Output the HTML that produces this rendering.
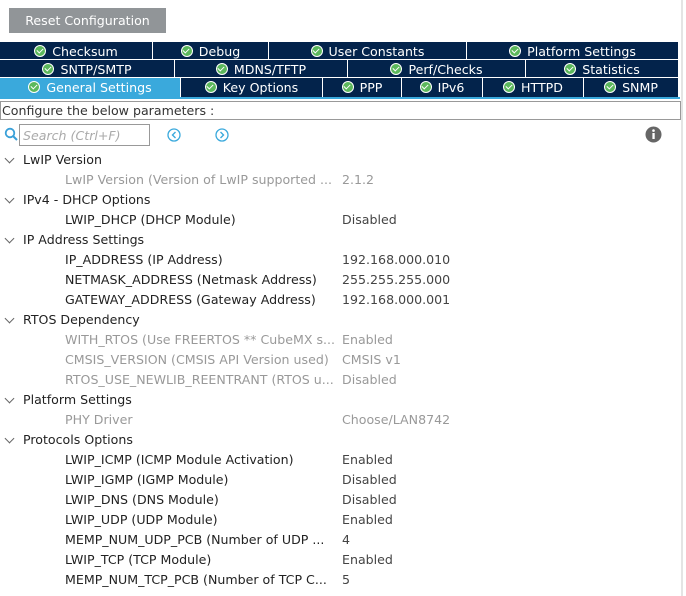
<!DOCTYPE html>
<html><head><style>
*{margin:0;padding:0;box-sizing:border-box}
body{width:686px;height:596px;background:#fff;font-family:"DejaVu Sans","Liberation Sans",sans-serif;font-size:12.6px;color:#222;position:relative;overflow:hidden}
.abs{position:absolute}
.btn{left:9px;top:8px;width:157px;height:25px;background:#919598;color:#fff;text-align:center;line-height:25px}
.tab{position:absolute;background:#03234b;color:#fff;text-align:center;white-space:nowrap;padding-top:1px}
.tab.sel{background:#3aa9dc}
.ck{display:inline-block;width:12px;height:12px;border-radius:50%;background:#5cb85c;border:1.5px solid #fff;vertical-align:-1px;margin-right:6px;position:relative}
.ck:after{content:"";position:absolute;left:2.5px;top:1px;width:3px;height:5px;border:solid #fff;border-width:0 1.6px 1.6px 0;transform:rotate(45deg)}
.row{position:absolute;height:20px;line-height:20px;white-space:nowrap}
.g{color:#999}
.v{position:absolute;left:342px;color:#444}
.chev{position:absolute;left:6px;width:7px;height:7px;border:solid #666;border-width:0 1px 1px 0;transform:rotate(45deg)}
</style></head><body>
<div class="abs btn">Reset Configuration</div>
<div class="tab" style="left:0;top:42px;width:152px;height:17px;line-height:17px"><span class="ck"></span>Checksum</div>
<div class="tab" style="left:153px;top:42px;width:115px;height:17px;line-height:17px"><span class="ck"></span>Debug</div>
<div class="tab" style="left:269px;top:42px;width:197px;height:17px;line-height:17px"><span class="ck"></span>User Constants</div>
<div class="tab" style="left:467px;top:42px;width:211px;height:17px;line-height:17px"><span class="ck"></span>Platform Settings</div>
<div class="tab" style="left:0;top:60px;width:174px;height:17px;line-height:17px"><span class="ck"></span>SNTP/SMTP</div>
<div class="tab" style="left:175px;top:60px;width:172px;height:17px;line-height:17px"><span class="ck"></span>MDNS/TFTP</div>
<div class="tab" style="left:348px;top:60px;width:177px;height:17px;line-height:17px"><span class="ck"></span>Perf/Checks</div>
<div class="tab" style="left:526px;top:60px;width:152px;height:17px;line-height:17px"><span class="ck"></span>Statistics</div>
<div class="tab sel" style="left:0;top:78px;width:180px;height:19px;line-height:17px"><span class="ck"></span>General Settings</div>
<div class="tab" style="left:181px;top:78px;width:141px;height:19px;line-height:17px"><span class="ck"></span>Key Options</div>
<div class="tab" style="left:323px;top:78px;width:78px;height:19px;line-height:17px"><span class="ck"></span>PPP</div>
<div class="tab" style="left:402px;top:78px;width:80px;height:19px;line-height:17px"><span class="ck"></span>IPv6</div>
<div class="tab" style="left:483px;top:78px;width:100px;height:19px;line-height:17px"><span class="ck"></span>HTTPD</div>
<div class="tab" style="left:584px;top:78px;width:94px;height:19px;line-height:17px"><span class="ck"></span>SNMP</div>
<div class="abs" style="left:0;top:97px;width:680px;height:2px;background:#3aa9dc"></div>
<div class="abs" style="left:681px;top:0;width:2px;height:596px;background:#e4e4e4"></div>
<div class="abs" style="left:0;top:101px;width:681px;height:19px;border:1px solid #999;line-height:18px;padding-left:1px;color:#333">Configure the below parameters :</div>
<svg class="abs" style="left:4px;top:127px" width="16" height="16"><circle cx="6" cy="6" r="4.3" fill="none" stroke="#3aa0d8" stroke-width="1.8"/><line x1="9" y1="9" x2="13" y2="13" stroke="#3aa0d8" stroke-width="2"/></svg>
<div class="abs" style="left:19px;top:124px;width:131px;height:22px;border:1px solid #999;color:#aaa;font-style:italic;line-height:21px;padding-left:3px">Search (Ctrl+F)</div>
<svg class="abs" style="left:167px;top:128px" width="14" height="14"><circle cx="7" cy="7" r="6" fill="none" stroke="#3aa9dc" stroke-width="1.3"/><path d="M8.5 4 L5.5 7 L8.5 10" fill="none" stroke="#3aa9dc" stroke-width="1.4"/></svg>
<svg class="abs" style="left:215px;top:128px" width="14" height="14"><circle cx="7" cy="7" r="6" fill="none" stroke="#3aa9dc" stroke-width="1.3"/><path d="M5.5 4 L8.5 7 L5.5 10" fill="none" stroke="#3aa9dc" stroke-width="1.4"/></svg>
<svg class="abs" style="left:645px;top:126px" width="17" height="17"><circle cx="8.5" cy="8.5" r="8" fill="#666"/><rect x="7.4" y="7" width="2.3" height="6" fill="#fff"/><circle cx="8.5" cy="4.6" r="1.3" fill="#fff"/></svg>

<div style="position:absolute;left:0;top:1px;width:686px;height:595px">
<div class="row" style="top:149px;left:0;width:680px"><span class="chev" style="top:5px"></span><span style="position:absolute;left:23px">LwIP Version</span></div>
<div class="row g" style="top:169px;left:65px">LwIP Version (Version of LwIP supported ...</div><div class="row v g" style="top:169px;color:#999">2.1.2</div>
<div class="row" style="top:189px;left:0"><span class="chev" style="top:5px"></span><span style="position:absolute;left:23px">IPv4 - DHCP Options</span></div>
<div class="row" style="top:209px;left:65px">LWIP_DHCP (DHCP Module)</div><div class="row v" style="top:209px">Disabled</div>
<div class="row" style="top:229px;left:0"><span class="chev" style="top:5px"></span><span style="position:absolute;left:23px">IP Address Settings</span></div>
<div class="row" style="top:249px;left:65px">IP_ADDRESS (IP Address)</div><div class="row v" style="top:249px">192.168.000.010</div>
<div class="row" style="top:269px;left:65px">NETMASK_ADDRESS (Netmask Address)</div><div class="row v" style="top:269px">255.255.255.000</div>
<div class="row" style="top:289px;left:65px">GATEWAY_ADDRESS (Gateway Address)</div><div class="row v" style="top:289px">192.168.000.001</div>
<div class="row" style="top:309px;left:0"><span class="chev" style="top:5px"></span><span style="position:absolute;left:23px">RTOS Dependency</span></div>
<div class="row g" style="top:329px;left:65px">WITH_RTOS (Use FREERTOS ** CubeMX s...</div><div class="row v" style="top:329px;color:#999">Enabled</div>
<div class="row g" style="top:349px;left:65px">CMSIS_VERSION (CMSIS API Version used)</div><div class="row v" style="top:349px;color:#999">CMSIS v1</div>
<div class="row g" style="top:369px;left:65px">RTOS_USE_NEWLIB_REENTRANT (RTOS u...</div><div class="row v" style="top:369px;color:#999">Disabled</div>
<div class="row" style="top:389px;left:0"><span class="chev" style="top:5px"></span><span style="position:absolute;left:23px">Platform Settings</span></div>
<div class="row g" style="top:409px;left:65px">PHY Driver</div><div class="row v" style="top:409px;color:#999">Choose/LAN8742</div>
<div class="row" style="top:429px;left:0"><span class="chev" style="top:5px"></span><span style="position:absolute;left:23px">Protocols Options</span></div>
<div class="row" style="top:449px;left:65px">LWIP_ICMP (ICMP Module Activation)</div><div class="row v" style="top:449px">Enabled</div>
<div class="row" style="top:469px;left:65px">LWIP_IGMP (IGMP Module)</div><div class="row v" style="top:469px">Disabled</div>
<div class="row" style="top:489px;left:65px">LWIP_DNS (DNS Module)</div><div class="row v" style="top:489px">Disabled</div>
<div class="row" style="top:509px;left:65px">LWIP_UDP (UDP Module)</div><div class="row v" style="top:509px">Enabled</div>
<div class="row" style="top:529px;left:65px">MEMP_NUM_UDP_PCB (Number of UDP ...</div><div class="row v" style="top:529px">4</div>
<div class="row" style="top:549px;left:65px">LWIP_TCP (TCP Module)</div><div class="row v" style="top:549px">Enabled</div>
<div class="row" style="top:569px;left:65px">MEMP_NUM_TCP_PCB (Number of TCP C...</div><div class="row v" style="top:569px">5</div>
</div>
</body></html>
